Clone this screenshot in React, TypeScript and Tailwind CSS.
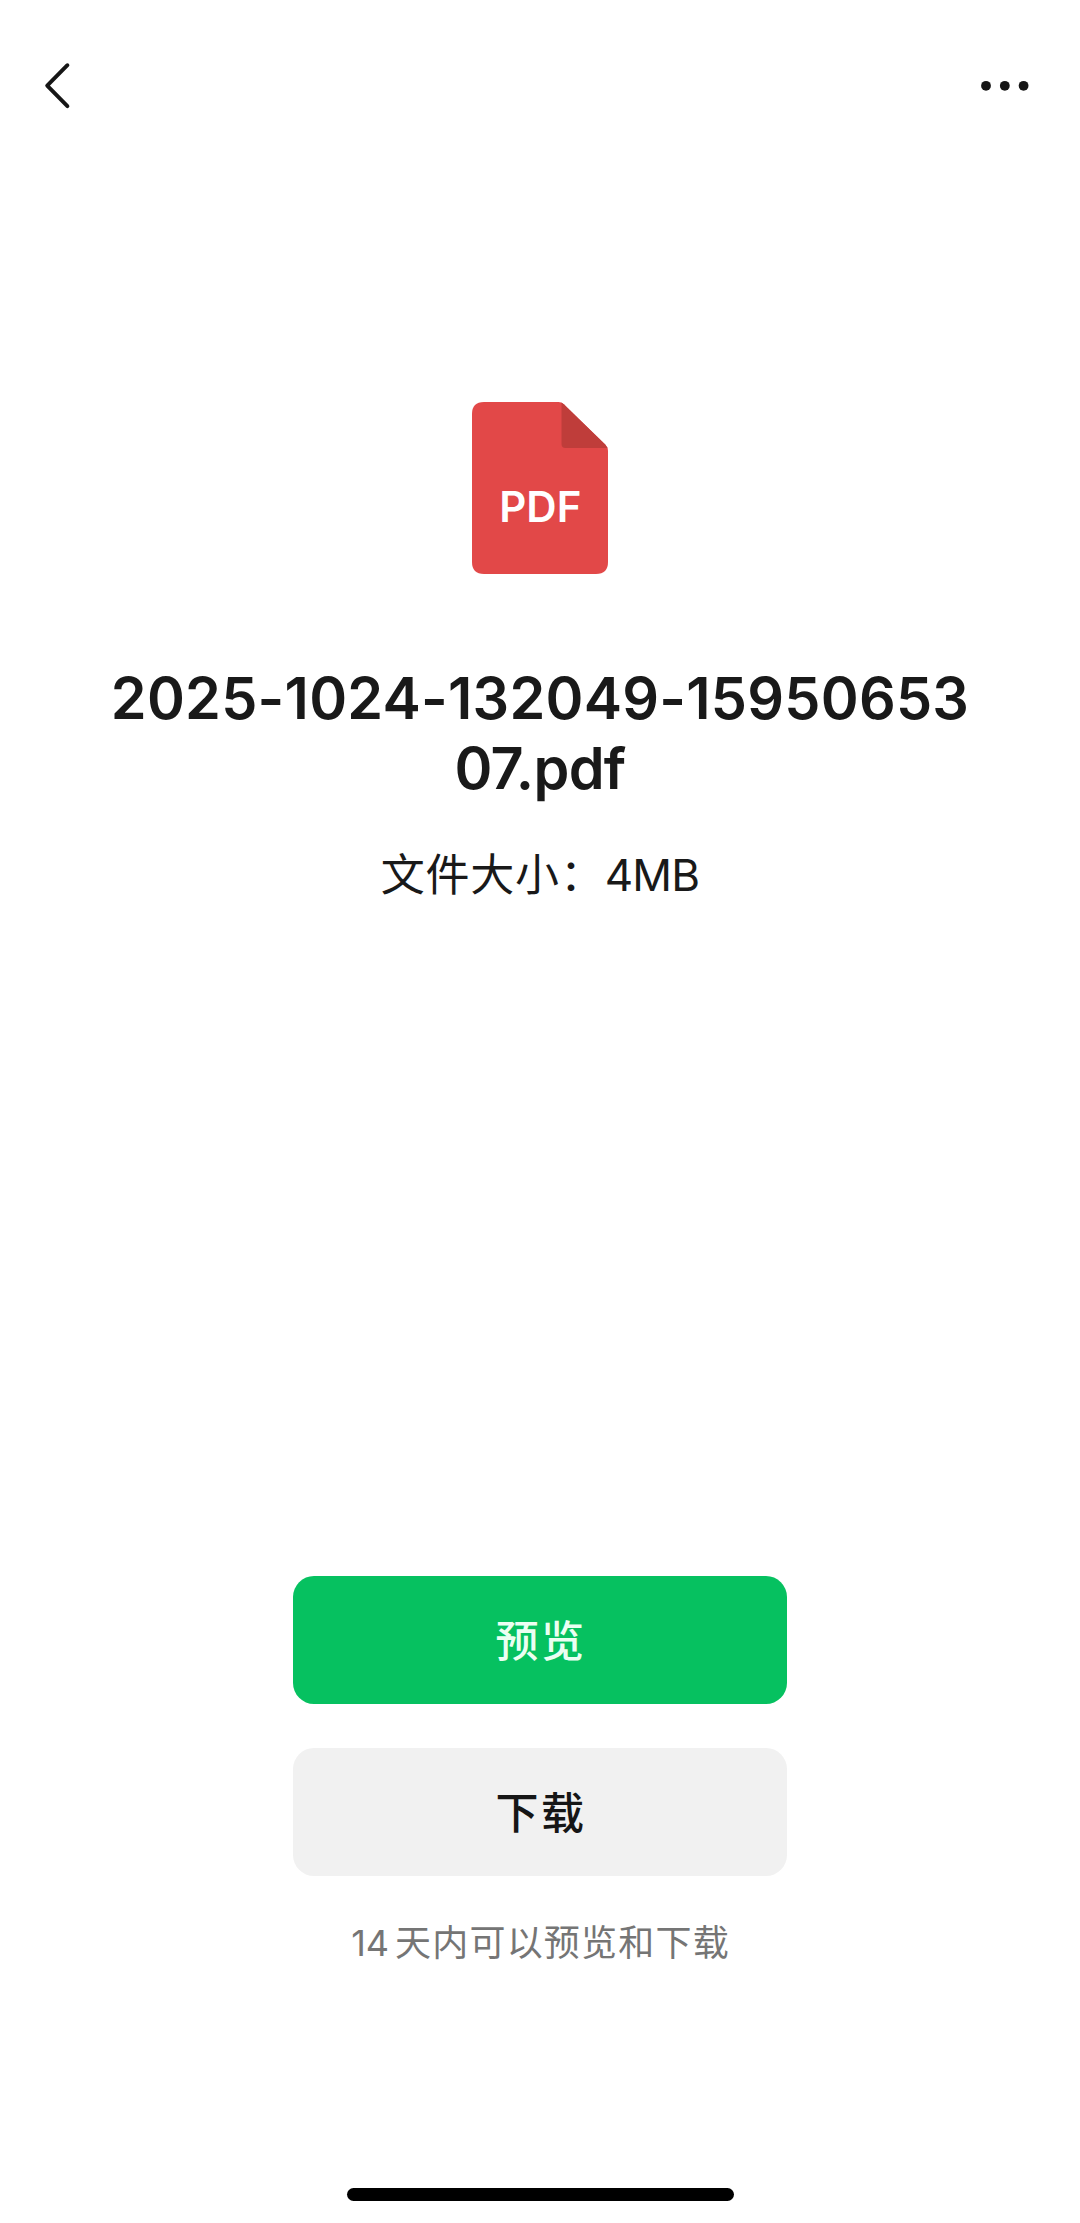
interface ActionButtonProps {
  label: string;
  primary?: boolean;
}

function BackIcon() {
  return (
    <svg width="32" height="50" viewBox="0 0 32 50" fill="none" className="block">
      <path
        d="M27.4 4.2L7.2 24.6L27.4 45.2"
        stroke="#161616"
        strokeWidth="3.9"
        strokeLinecap="round"
        strokeLinejoin="round"
      />
    </svg>
  );
}

function MoreIcon() {
  return (
    <svg width="50" height="12" viewBox="0 0 50 12" fill="#161616" className="block">
      <circle cx="6" cy="5.8" r="4.9" />
      <circle cx="24.8" cy="5.8" r="4.9" />
      <circle cx="43.6" cy="5.8" r="4.9" />
    </svg>
  );
}

function PdfIcon() {
  return (
    <svg width="136" height="172" viewBox="0 0 136 172" className="block">
      <path
        d="M12 0H86.5Q89.5 0 91.8 2.2L133.2 42.6Q136 45.4 136 49V160Q136 172 124 172H12Q0 172 0 160V12Q0 0 12 0Z"
        fill="#e24848"
      />
      <path d="M89.5 0.6L91.8 2.2L133.2 42.6L135.6 46H93.5Q89.5 46 89.5 42Z" fill="#bf3d3a" />
      <text
        x="68.3"
        y="120.3"
        textAnchor="middle"
        fill="#fff"
        className="font-['Inter',sans-serif] text-[42px] font-semibold"
      >
        PDF
      </text>
    </svg>
  );
}

function ActionButton({ label, primary = false }: ActionButtonProps) {
  return (
    <button
      className={
        primary
          ? 'h-[128px] w-[494px] rounded-[21px] bg-[#06c160] pt-[3px] pl-[2px] text-[43px] font-medium tracking-[2.5px] text-[#ebfff2]'
          : 'h-[128px] w-[494px] rounded-[21px] bg-[#f1f1f1] pt-[3px] pl-[2px] text-[43px] font-medium tracking-[2.5px] text-[#161616]'
      }
    >
      {label}
    </button>
  );
}

export default function App() {
  return (
    <div className="flex h-[2223px] w-[1080px] flex-col items-center bg-white font-['Inter','Noto_Sans_CJK_SC',sans-serif] text-[#191919]">
      <header className="flex h-[171px] w-full shrink-0 items-center justify-between pr-[50px] pl-[40px]">
        <BackIcon />
        <MoreIcon />
      </header>

      <main className="flex w-full flex-col items-center pt-[231px]">
        <PdfIcon />
        <h1 className="mt-[89px] text-center text-[57.5px] leading-[70px] font-semibold whitespace-nowrap">
          <span className="block tracking-[0.25px]">2025-1024-132049-15950653</span>
          <span className="block tracking-[-0.7px]">07.pdf</span>
        </h1>
        <p className="mt-[39px] text-[44px] leading-[66px] whitespace-nowrap">
          <span className="tracking-[0.8px]">文件大小：</span>
          <span className="tracking-[-0.8px]">4MB</span>
        </p>
      </main>

      <footer className="mt-auto flex flex-col items-center">
        <ActionButton label="预览" primary />
        <div className="h-[44px]" />
        <ActionButton label="下载" />
        <p className="mt-[40px] pl-[1px] text-[36px] leading-[54px] whitespace-nowrap text-[#757575]">
          <span className="mr-[6px]">14</span>
          <span className="tracking-[1.2px]">天内可以预览和下载</span>
        </p>
        <div className="mt-[218px] mb-[22px] h-[13px] w-[387px] rounded-full bg-black" />
      </footer>
    </div>
  );
}
